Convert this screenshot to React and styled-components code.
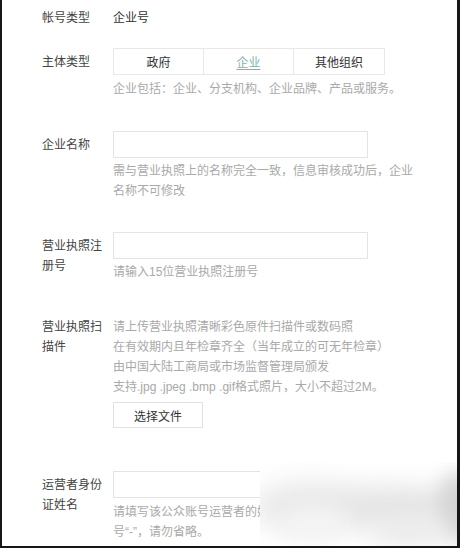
import React from "react";
import styled, { createGlobalStyle } from "styled-components";

const GlobalStyle = createGlobalStyle`
  html, body {
    margin: 0;
    padding: 0;
    background: #fff;
  }
  body {
    font-family: "Liberation Sans", "Noto Sans CJK SC", sans-serif;
  }
`;

const Page = styled.div`
  position: relative;
  width: 460px;
  height: 548px;
  box-sizing: border-box;
  border-left: 2px solid #161616;
  border-right: 3px solid #161616;
  border-bottom: 2px solid #161616;
  padding: 8px 0 0 40px;
  overflow: hidden;
  background: #fff;
`;

const Row = styled.div`
  display: grid;
  grid-template-columns: 71px 1fr;
  align-items: start;
  margin-top: ${(p) => p.$gap || 0}px;
`;

const Label = styled.div`
  width: 62px;
  font-size: 12px;
  line-height: 20px;
  color: #444;
  padding-top: ${(p) => (p.$flat ? 0 : 4)}px;
`;

const Value = styled.div`
  font-size: 12px;
  line-height: 20px;
  color: #333;
`;

const Field = styled.div`
  display: flex;
  flex-direction: column;
  align-items: flex-start;
`;

const Segments = styled.div`
  display: flex;
  border: 1px solid #e8e8e8;
  height: 25px;
`;

const Segment = styled.div`
  width: ${(p) => p.$w}px;
  display: flex;
  align-items: center;
  justify-content: center;
  font-size: 12px;
  color: ${(p) => (p.$active ? "#7db3ad" : "#333")};
  text-decoration: ${(p) => (p.$active ? "underline" : "none")};
  text-underline-offset: 2px;
  & + & {
    border-left: 1px solid #e8e8e8;
  }
`;

const Input = styled.div`
  width: 253px;
  height: 25px;
  border: 1px solid #e4e4e4;
  background: #fff;
`;

const Hint = styled.div`
  width: 300px;
  margin-top: ${(p) => (p.$top === undefined ? 3 : p.$top)}px;
  font-size: 12px;
  line-height: 20px;
  color: #a9a9a9;
`;

const FileButton = styled.div`
  margin-top: 5px;
  width: 88px;
  height: 24px;
  border: 1px solid #e2e2e2;
  display: flex;
  align-items: center;
  justify-content: center;
  font-size: 12px;
  color: #333;
`;

const Smudge = styled.div`
  position: absolute;
  left: 258px;
  top: 462px;
  width: 200px;
  height: 84px;
  background: #fff;
  overflow: hidden;
`;

const Blob = styled.div`
  position: absolute;
  left: ${(p) => p.$x}px;
  top: ${(p) => p.$y}px;
  width: ${(p) => p.$w}px;
  height: ${(p) => p.$h}px;
  border-radius: 50%;
  background: ${(p) => p.$c};
  filter: blur(${(p) => p.$b}px);
`;

export default function App() {
  return (
    <>
      <GlobalStyle />
      <Page>
        <Row>
          <Label $flat>帐号类型</Label>
          <Value>企业号</Value>
        </Row>

        <Row $gap={20}>
          <Label>主体类型</Label>
          <Field>
            <Segments>
              <Segment $w={89}>政府</Segment>
              <Segment $w={89} $active>
                企业
              </Segment>
              <Segment $w={90}>其他组织</Segment>
            </Segments>
            <Hint $top={4}>企业包括：企业、分支机构、企业品牌、产品或服务。</Hint>
          </Field>
        </Row>

        <Row $gap={32}>
          <Label>企业名称</Label>
          <Field>
            <Input />
            <Hint>需与营业执照上的名称完全一致，信息审核成功后，企业名称不可修改</Hint>
          </Field>
        </Row>

        <Row $gap={31}>
          <Label>营业执照注册号</Label>
          <Field>
            <Input />
            <Hint>请输入15位营业执照注册号</Hint>
          </Field>
        </Row>

        <Row $gap={35}>
          <Label $flat>营业执照扫描件</Label>
          <Field>
            <Hint $top={0}>
              请上传营业执照清晰彩色原件扫描件或数码照
              <br />
              在有效期内且年检章齐全（当年成立的可无年检章）
              <br />
              由中国大陆工商局或市场监督管理局颁发
              <br />
              支持.jpg .jpeg .bmp .gif格式照片，大小不超过2M。
            </Hint>
            <FileButton>选择文件</FileButton>
          </Field>
        </Row>

        <Row $gap={43}>
          <Label>运营者身份证姓名</Label>
          <Field>
            <Input />
            <Hint $top={4}>
              请填写该公众账号运营者的姓名，如果名字包含分隔
              <br />
              号“-”，请勿省略。
            </Hint>
          </Field>
        </Row>

        <Smudge>
          <Blob $x={-10} $y={20} $w={120} $h={50} $c="#e8e8e8" $b={14} />
          <Blob $x={80} $y={25} $w={110} $h={40} $c="#e2e2e2" $b={14} />
          <Blob $x={20} $y={45} $w={70} $h={30} $c="#f4f4f4" $b={10} />
          <Blob $x={175} $y={10} $w={50} $h={70} $c="#d4d4d4" $b={10} />
          <Blob $x={110} $y={55} $w={80} $h={30} $c="#eaeaea" $b={12} />
        </Smudge>
      </Page>
    </>
  );
}
